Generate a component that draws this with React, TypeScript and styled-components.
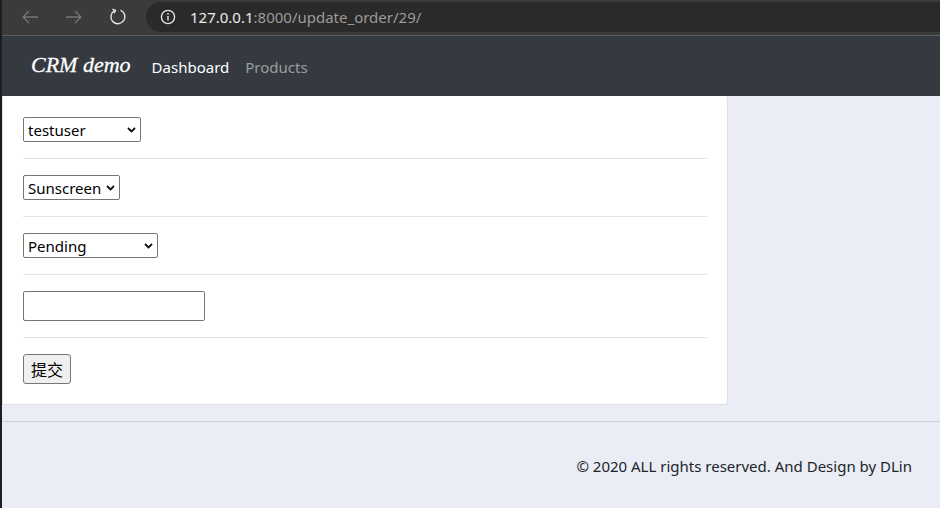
import styled, { createGlobalStyle } from 'styled-components';

const GlobalStyle = createGlobalStyle`
  html, body {
    margin: 0;
    padding: 0;
    background: #eaedf5;
  }
  body {
    font-family: "Noto Sans", "Open Sans", "Noto Sans CJK SC", sans-serif;
    color: #212529;
  }
  * {
    box-sizing: border-box;
  }
`;

const Window = styled.div`
  min-height: 100vh;
  border-left: 2px solid #1e1e1e;
  background: #eaedf5;
`;

const BrowserBar = styled.div`
  display: flex;
  align-items: stretch;
  height: 36px;
  padding: 2px 0 3px 0;
  background: #3b3b3b;
  border-bottom: 1px solid #5d5d5d;
`;

const NavButtons = styled.div`
  display: flex;
  align-items: center;
  gap: 12px;
  padding-left: 12px;
  width: 144px;
`;

const NavButton = styled.div`
  width: 32px;
  height: 30px;
  display: flex;
  align-items: center;
  justify-content: center;
`;

const Omnibox = styled.div`
  flex: 1;
  display: flex;
  align-items: center;
  gap: 14px;
  padding-left: 14px;
  background: #2a2a2a;
  border-radius: 15px 0 0 15px;
`;

const Url = styled.div`
  font-size: 15px;
  color: #9b9b9b;
`;

const Host = styled.span`
  color: #ececec;
`;

const Navbar = styled.nav`
  height: 60px;
  display: flex;
  align-items: center;
  padding-left: 29px;
  background: #343a40;
`;

const Brand = styled.a`
  font-family: "Liberation Serif", "Times New Roman", serif;
  font-style: italic;
  font-size: 22px;
  color: #ffffff;
  margin-right: 13px;
  margin-top: -3px;
  -webkit-text-stroke: 0.3px #ffffff;
`;

const NavLink = styled.a<{ $active?: boolean }>`
  font-size: 15px;
  padding: 0 8px;
  margin-top: 1px;
  color: ${({ $active }) => ($active ? '#ffffff' : 'rgba(255, 255, 255, 0.5)')};
`;

const Card = styled.div`
  width: 726px;
  padding: 21px 20px 20px 20px;
  background: #ffffff;
  border: 1px solid #dedede;
  border-top: none;
  border-radius: 0 3px 4px 0;
`;

const Field = styled.div`
  display: flex;
`;

const Rule = styled.hr`
  margin: 16px 0;
  border: 0;
  border-top: 1px solid #e3e3e3;
`;

const SelectBox = styled.div<{ $width: number }>`
  position: relative;
  width: ${({ $width }) => $width}px;
  height: 25px;
`;

const Select = styled.select`
  appearance: none;
  width: 100%;
  height: 100%;
  margin: 0;
  padding: 0 0 0 4px;
  font-family: inherit;
  font-size: 15px;
  color: #000000;
  background: #ffffff;
  border: 1px solid #767676;
  border-radius: 2px;
`;

const Chevron = styled.svg`
  position: absolute;
  right: 5px;
  top: 10px;
  pointer-events: none;
`;

const TextInput = styled.input`
  width: 182px;
  height: 30px;
  margin: 0;
  border: 1px solid #767676;
  border-radius: 2px;
  background: #ffffff;
`;

const SubmitButton = styled.button`
  width: 48px;
  height: 30px;
  padding: 0;
  font-family: "Noto Sans CJK SC", sans-serif;
  font-size: 16px;
  color: #000000;
  background: #efefef;
  border: 1px solid #767676;
  border-radius: 3px;
`;

const FooterRule = styled.hr`
  margin: 16px 0 0 0;
  border: 0;
  border-top: 1px solid #cfd2d9;
`;

const Footer = styled.footer`
  padding: 33px 28px 0 0;
  text-align: right;
  font-size: 15px;
  line-height: 22px;
  color: #212529;
`;

function Dropdown({ width, value }: { width: number; value: string }) {
  return (
    <SelectBox $width={width}>
      <Select defaultValue={value}>
        <option>{value}</option>
      </Select>
      <Chevron width="9" height="6" viewBox="0 0 9 6">
        <path d="M1 1 L4.5 4.5 L8 1" fill="none" stroke="#111" strokeWidth="1.8" />
      </Chevron>
    </SelectBox>
  );
}

export default function App() {
  return (
    <>
      <GlobalStyle />
      <Window>
        <BrowserBar>
          <NavButtons>
            <NavButton>
              <svg width="18" height="16" viewBox="0 0 18 16">
                <path d="M17 8 H2 M8 2 L2 8 L8 14" fill="none" stroke="#777" strokeWidth="1.3" />
              </svg>
            </NavButton>
            <NavButton>
              <svg width="18" height="16" viewBox="0 0 18 16">
                <path d="M1 8 H16 M10 2 L16 8 L10 14" fill="none" stroke="#777" strokeWidth="1.3" />
              </svg>
            </NavButton>
            <NavButton>
              <svg width="18" height="18" viewBox="0 0 18 18">
                <path d="M11.5 2.2 A7 7 0 1 1 5.5 2.6" fill="none" stroke="#e6e6e6" strokeWidth="1.4" />
                <path d="M3.5 1.2 L6.4 2.4 L5.2 5.3" fill="none" stroke="#e6e6e6" strokeWidth="1.4" />
              </svg>
            </NavButton>
          </NavButtons>
          <Omnibox>
            <svg width="16" height="16" viewBox="0 0 16 16">
              <circle cx="8" cy="8" r="6.6" fill="none" stroke="#e6e6e6" strokeWidth="1.3" />
              <path d="M8 7 V11.5" stroke="#e6e6e6" strokeWidth="1.4" />
              <circle cx="8" cy="4.8" r="0.9" fill="#e6e6e6" />
            </svg>
            <Url>
              <Host>127.0.0.1</Host>:8000/update_order/29/
            </Url>
          </Omnibox>
        </BrowserBar>

        <Navbar>
          <Brand>CRM demo</Brand>
          <NavLink $active>Dashboard</NavLink>
          <NavLink>Products</NavLink>
        </Navbar>

        <Card>
          <Field>
            <Dropdown width={118} value="testuser" />
          </Field>
          <Rule />
          <Field>
            <Dropdown width={97} value="Sunscreen" />
          </Field>
          <Rule />
          <Field>
            <Dropdown width={135} value="Pending" />
          </Field>
          <Rule />
          <Field>
            <TextInput type="text" />
          </Field>
          <Rule />
          <Field>
            <SubmitButton type="submit">提交</SubmitButton>
          </Field>
        </Card>

        <FooterRule />
        <Footer>© 2020 ALL rights reserved. And Design by DLin</Footer>
      </Window>
    </>
  );
}
